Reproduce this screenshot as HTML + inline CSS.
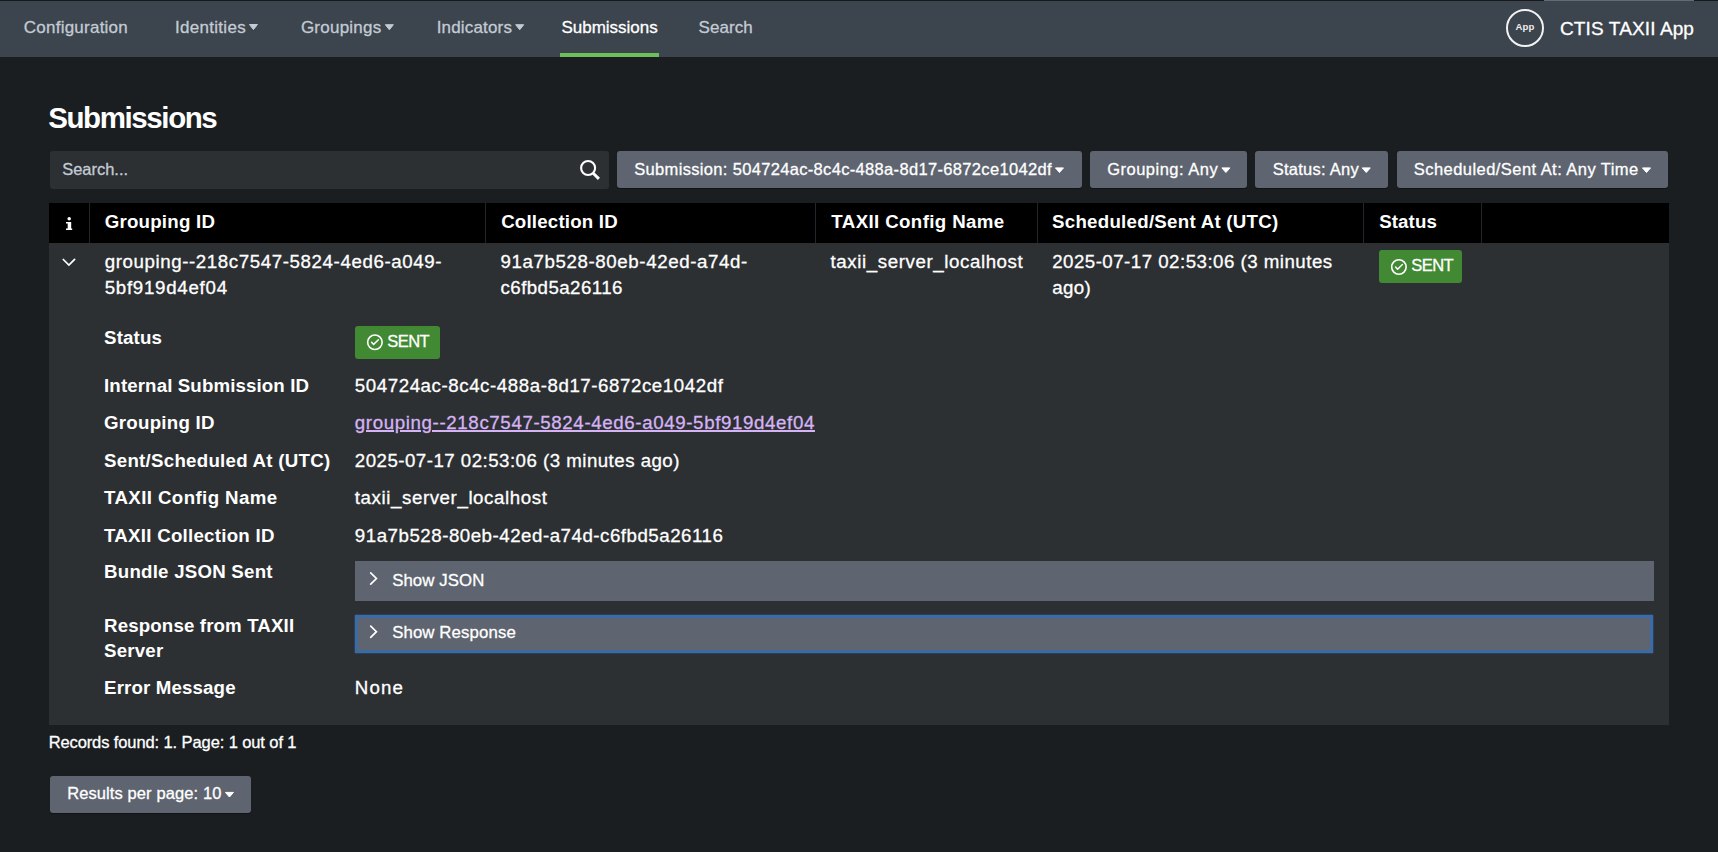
<!DOCTYPE html>
<html><head><meta charset="utf-8">
<style>
html,body{margin:0;padding:0;}
body{width:1718px;height:852px;overflow:hidden;position:relative;background:#1a1e21;font-family:"Liberation Sans",sans-serif;}
.b{position:absolute;}
.t{position:absolute;white-space:pre;}
svg{position:absolute;overflow:visible;}
</style></head><body>
<!-- top strip -->
<div class="b" style="left:0;top:0;width:1718px;height:1px;background:#161a1d"></div>
<div class="b" style="left:1544px;top:0;width:150px;height:1px;background:#636a76"></div>
<!-- nav -->
<div class="b" style="left:0;top:1px;width:1718px;height:56px;background:#3c444d"></div>
<div class="b" style="left:560px;top:53px;width:99px;height:4px;background:#6cbf5b"></div>
<!-- app circle -->
<div class="b" style="left:1506px;top:9px;width:34px;height:34px;border:2px solid #f2f2f2;border-radius:50%"></div>
<div class="t" style="left:1515.5px;top:22px;font-size:9.6px;line-height:10px;font-weight:700;color:#eeeeee;letter-spacing:0.15px">App</div>
<!-- search input -->
<div class="b" style="left:50px;top:151px;width:559px;height:38px;background:#2d3033;border-radius:3px"></div>
<!-- filter buttons -->
<div class="b" style="left:617px;top:151px;width:465px;height:37px;background:#5e6570;border-radius:3px;box-shadow:0 1px 0 #101316"></div>
<div class="b" style="left:1090px;top:151px;width:157px;height:37px;background:#5e6570;border-radius:3px;box-shadow:0 1px 0 #101316"></div>
<div class="b" style="left:1255px;top:151px;width:133px;height:37px;background:#5e6570;border-radius:3px;box-shadow:0 1px 0 #101316"></div>
<div class="b" style="left:1397px;top:151px;width:271px;height:37px;background:#5e6570;border-radius:3px;box-shadow:0 1px 0 #101316"></div>
<!-- table -->
<div class="b" style="left:49px;top:203px;width:1620px;height:40px;background:#000"></div>
<div class="b" style="left:89px;top:203px;width:1px;height:40px;background:#22272b"></div>
<div class="b" style="left:485px;top:203px;width:1px;height:40px;background:#22272b"></div>
<div class="b" style="left:815px;top:203px;width:1px;height:40px;background:#22272b"></div>
<div class="b" style="left:1037px;top:203px;width:1px;height:40px;background:#22272b"></div>
<div class="b" style="left:1363px;top:203px;width:1px;height:40px;background:#22272b"></div>
<div class="b" style="left:1481px;top:203px;width:1px;height:40px;background:#22272b"></div>
<div class="b" style="left:49px;top:243px;width:1620px;height:482px;background:#2d3033"></div>
<!-- badges -->
<div class="b" style="left:1379px;top:250px;width:83px;height:33px;background:#428934;border-radius:3px"></div>
<div class="b" style="left:355px;top:326px;width:85px;height:33px;background:#428934;border-radius:3px"></div>
<!-- show boxes -->
<div class="b" style="left:355px;top:561px;width:1299px;height:40px;background:#5e6570"></div>
<div class="b" style="left:355px;top:615px;width:1292px;height:32px;background:#5e6570;border:3px solid #3a6ba6;box-shadow:0 0 1.5px #3a6ba6"></div>
<!-- footer button -->
<div class="b" style="left:50px;top:776px;width:201px;height:37px;background:#5e6570;border-radius:3px;box-shadow:0 1px 0 #101316"></div>
<!-- ICONS -->
<svg width="1718" height="852" style="left:0;top:0" viewBox="0 0 1718 852"><path d="M249.45 24.50H257.45L253.45 29.60Z" fill="#c3cbd4" stroke="#c3cbd4" stroke-width="1.0" stroke-linejoin="round"/><path d="M385.35 24.70H393.35L389.35 29.80Z" fill="#c3cbd4" stroke="#c3cbd4" stroke-width="1.0" stroke-linejoin="round"/><path d="M515.70 24.70H523.70L519.70 29.80Z" fill="#c3cbd4" stroke="#c3cbd4" stroke-width="1.0" stroke-linejoin="round"/><path d="M1055.45 167.90H1063.45L1059.45 172.50Z" fill="#ffffff" stroke="#ffffff" stroke-width="1.0" stroke-linejoin="round"/><path d="M1221.90 167.90H1229.90L1225.90 172.50Z" fill="#ffffff" stroke="#ffffff" stroke-width="1.0" stroke-linejoin="round"/><path d="M1362.25 167.90H1370.25L1366.25 172.50Z" fill="#ffffff" stroke="#ffffff" stroke-width="1.0" stroke-linejoin="round"/><path d="M1642.50 167.90H1650.50L1646.50 172.50Z" fill="#ffffff" stroke="#ffffff" stroke-width="1.0" stroke-linejoin="round"/><path d="M225.45 792.40H233.45L229.45 797.00Z" fill="#ffffff" stroke="#ffffff" stroke-width="1.0" stroke-linejoin="round"/><circle cx="588.1" cy="168" r="7.0" fill="none" stroke="#fff" stroke-width="2.1"/><path d="M593.2 173.3L598.9 178.9" stroke="#fff" stroke-width="3.0" stroke-linecap="butt"/><circle cx="69.2" cy="218.7" r="1.75" fill="#fff"/><path d="M66 222H71.2V228.6H72.2V230H66V228.6H67.7V223.4H66Z" fill="#fff"/><path d="M63.3 259.5L68.9 265.1L74.6 259.4" fill="none" stroke="#fff" stroke-width="1.75" stroke-linecap="round" stroke-linejoin="miter"/><path d="M370.7 572.9L376.4 578.5L370.7 584.1" fill="none" stroke="#fff" stroke-width="1.7" stroke-linecap="round"/><path d="M370.7 626.1L376.4 631.7L370.7 637.3000000000001" fill="none" stroke="#fff" stroke-width="1.7" stroke-linecap="round"/><circle cx="1398.9" cy="267.0" r="7.25" fill="none" stroke="#fff" stroke-width="1.6"/><path d="M1395.60 267.10L1397.60 269.20L1402.40 264.50" fill="none" stroke="#fff" stroke-width="1.5" stroke-linecap="round" stroke-linejoin="round"/><circle cx="374.9" cy="342.2" r="7.25" fill="none" stroke="#fff" stroke-width="1.6"/><path d="M371.60 342.30L373.60 344.40L378.40 339.70" fill="none" stroke="#fff" stroke-width="1.5" stroke-linecap="round" stroke-linejoin="round"/></svg>
<div class='t' style='left:23.82px;top:19.00px;font-size:17px;line-height:17px;font-weight:400;color:#c3cbd4;letter-spacing:0.236px;-webkit-text-stroke:0.3px #c3cbd4;'>Configuration</div>
<div class='t' style='left:175.02px;top:19.00px;font-size:17px;line-height:17px;font-weight:400;color:#c3cbd4;letter-spacing:0.290px;-webkit-text-stroke:0.3px #c3cbd4;'>Identities</div>
<div class='t' style='left:300.92px;top:19.00px;font-size:17px;line-height:17px;font-weight:400;color:#c3cbd4;letter-spacing:0.240px;-webkit-text-stroke:0.3px #c3cbd4;'>Groupings</div>
<div class='t' style='left:436.72px;top:19.00px;font-size:17px;line-height:17px;font-weight:400;color:#c3cbd4;letter-spacing:0.162px;-webkit-text-stroke:0.3px #c3cbd4;'>Indicators</div>
<div class='t' style='left:561.42px;top:19.00px;font-size:17px;line-height:17px;font-weight:400;color:#ffffff;letter-spacing:-0.002px;-webkit-text-stroke:0.3px #ffffff;'>Submissions</div>
<div class='t' style='left:698.62px;top:19.00px;font-size:17px;line-height:17px;font-weight:400;color:#c3cbd4;letter-spacing:0.057px;-webkit-text-stroke:0.3px #c3cbd4;'>Search</div>
<div class='t' style='left:1560.04px;top:19.00px;font-size:19px;line-height:19px;font-weight:400;color:#ffffff;letter-spacing:0.120px;-webkit-text-stroke:0.3px #ffffff;'>CTIS TAXII App</div>
<div class='t' style='left:48.22px;top:103.00px;font-size:29.5px;line-height:29.5px;font-weight:700;color:#ffffff;letter-spacing:-1.405px;'>Submissions</div>
<div class='t' style='left:62.24px;top:161.00px;font-size:16.5px;line-height:16.5px;font-weight:400;color:#c3cbd4;letter-spacing:-0.028px;-webkit-text-stroke:0.3px #c3cbd4;'>Search...</div>
<div class='t' style='left:634.24px;top:161.00px;font-size:16.5px;line-height:16.5px;font-weight:400;color:#ffffff;letter-spacing:0.330px;-webkit-text-stroke:0.3px #ffffff;'>Submission: 504724ac-8c4c-488a-8d17-6872ce1042df</div>
<div class='t' style='left:1107.24px;top:161.00px;font-size:16.5px;line-height:16.5px;font-weight:400;color:#ffffff;letter-spacing:0.487px;-webkit-text-stroke:0.3px #ffffff;'>Grouping: Any</div>
<div class='t' style='left:1272.74px;top:161.00px;font-size:16.5px;line-height:16.5px;font-weight:400;color:#ffffff;letter-spacing:0.255px;-webkit-text-stroke:0.3px #ffffff;'>Status: Any</div>
<div class='t' style='left:1413.74px;top:161.00px;font-size:16.5px;line-height:16.5px;font-weight:400;color:#ffffff;letter-spacing:0.450px;-webkit-text-stroke:0.3px #ffffff;'>Scheduled/Sent At: Any Time</div>
<div class='t' style='left:104.65px;top:213.00px;font-size:18.7px;line-height:18.7px;font-weight:700;color:#ffffff;letter-spacing:0.233px;'>Grouping ID</div>
<div class='t' style='left:501.15px;top:213.00px;font-size:18.7px;line-height:18.7px;font-weight:700;color:#ffffff;letter-spacing:0.198px;'>Collection ID</div>
<div class='t' style='left:831.35px;top:213.00px;font-size:18.7px;line-height:18.7px;font-weight:700;color:#ffffff;letter-spacing:0.380px;'>TAXII Config Name</div>
<div class='t' style='left:1052.05px;top:213.00px;font-size:18.7px;line-height:18.7px;font-weight:700;color:#ffffff;letter-spacing:0.261px;'>Scheduled/Sent At (UTC)</div>
<div class='t' style='left:1379.15px;top:213.00px;font-size:18.7px;line-height:18.7px;font-weight:700;color:#ffffff;letter-spacing:0.114px;'>Status</div>
<div class='t' style='left:104.65px;top:253.00px;font-size:18.7px;line-height:18.7px;font-weight:400;color:#ffffff;letter-spacing:0.603px;-webkit-text-stroke:0.3px #ffffff;'>grouping--218c7547-5824-4ed6-a049-</div>
<div class='t' style='left:104.65px;top:279.00px;font-size:18.7px;line-height:18.7px;font-weight:400;color:#ffffff;letter-spacing:0.733px;-webkit-text-stroke:0.3px #ffffff;'>5bf919d4ef04</div>
<div class='t' style='left:500.55px;top:253.00px;font-size:18.7px;line-height:18.7px;font-weight:400;color:#ffffff;letter-spacing:0.606px;-webkit-text-stroke:0.3px #ffffff;'>91a7b528-80eb-42ed-a74d-</div>
<div class='t' style='left:500.55px;top:279.00px;font-size:18.7px;line-height:18.7px;font-weight:400;color:#ffffff;letter-spacing:0.437px;-webkit-text-stroke:0.3px #ffffff;'>c6fbd5a26116</div>
<div class='t' style='left:830.55px;top:253.00px;font-size:18.7px;line-height:18.7px;font-weight:400;color:#ffffff;letter-spacing:0.595px;-webkit-text-stroke:0.3px #ffffff;'>taxii_server_localhost</div>
<div class='t' style='left:1052.15px;top:253.00px;font-size:18.7px;line-height:18.7px;font-weight:400;color:#ffffff;letter-spacing:0.484px;-webkit-text-stroke:0.3px #ffffff;'>2025-07-17 02:53:06 (3 minutes</div>
<div class='t' style='left:1052.15px;top:279.00px;font-size:18.7px;line-height:18.7px;font-weight:400;color:#ffffff;letter-spacing:0.397px;-webkit-text-stroke:0.3px #ffffff;'>ago)</div>
<div class='t' style='left:104.05px;top:329.00px;font-size:18.7px;line-height:18.7px;font-weight:700;color:#ffffff;letter-spacing:0.134px;'>Status</div>
<div class='t' style='left:104.05px;top:377.00px;font-size:18.7px;line-height:18.7px;font-weight:700;color:#ffffff;letter-spacing:0.115px;'>Internal Submission ID</div>
<div class='t' style='left:104.05px;top:414.00px;font-size:18.7px;line-height:18.7px;font-weight:700;color:#ffffff;letter-spacing:0.243px;'>Grouping ID</div>
<div class='t' style='left:104.05px;top:452.00px;font-size:18.7px;line-height:18.7px;font-weight:700;color:#ffffff;letter-spacing:0.256px;'>Sent/Scheduled At (UTC)</div>
<div class='t' style='left:104.05px;top:489.00px;font-size:18.7px;line-height:18.7px;font-weight:700;color:#ffffff;letter-spacing:0.393px;'>TAXII Config Name</div>
<div class='t' style='left:104.05px;top:527.00px;font-size:18.7px;line-height:18.7px;font-weight:700;color:#ffffff;letter-spacing:0.256px;'>TAXII Collection ID</div>
<div class='t' style='left:104.05px;top:563.00px;font-size:18.7px;line-height:18.7px;font-weight:700;color:#ffffff;letter-spacing:0.226px;'>Bundle JSON Sent</div>
<div class='t' style='left:104.05px;top:617.00px;font-size:18.7px;line-height:18.7px;font-weight:700;color:#ffffff;letter-spacing:0.138px;'>Response from TAXII</div>
<div class='t' style='left:104.05px;top:642.00px;font-size:18.7px;line-height:18.7px;font-weight:700;color:#ffffff;letter-spacing:0.199px;'>Server</div>
<div class='t' style='left:104.05px;top:679.00px;font-size:18.7px;line-height:18.7px;font-weight:700;color:#ffffff;letter-spacing:0.138px;'>Error Message</div>
<div class='t' style='left:354.85px;top:377.00px;font-size:18.7px;line-height:18.7px;font-weight:400;color:#ffffff;letter-spacing:0.569px;-webkit-text-stroke:0.3px #ffffff;'>504724ac-8c4c-488a-8d17-6872ce1042df</div>
<div class='t' style='left:354.85px;top:414.00px;font-size:18.7px;line-height:18.7px;font-weight:400;color:#d5b3f5;letter-spacing:0.629px;-webkit-text-stroke:0.3px #d5b3f5;text-decoration:underline;text-underline-offset:0.6px;text-decoration-thickness:2px;'>grouping--218c7547-5824-4ed6-a049-5bf919d4ef04</div>
<div class='t' style='left:354.85px;top:452.00px;font-size:18.7px;line-height:18.7px;font-weight:400;color:#ffffff;letter-spacing:0.472px;-webkit-text-stroke:0.3px #ffffff;'>2025-07-17 02:53:06 (3 minutes ago)</div>
<div class='t' style='left:354.85px;top:489.00px;font-size:18.7px;line-height:18.7px;font-weight:400;color:#ffffff;letter-spacing:0.585px;-webkit-text-stroke:0.3px #ffffff;'>taxii_server_localhost</div>
<div class='t' style='left:354.85px;top:527.00px;font-size:18.7px;line-height:18.7px;font-weight:400;color:#ffffff;letter-spacing:0.519px;-webkit-text-stroke:0.3px #ffffff;'>91a7b528-80eb-42ed-a74d-c6fbd5a26116</div>
<div class='t' style='left:354.85px;top:679.00px;font-size:18.7px;line-height:18.7px;font-weight:400;color:#ffffff;letter-spacing:1.103px;-webkit-text-stroke:0.3px #ffffff;'>None</div>
<div class='t' style='left:392.13px;top:573.00px;font-size:16.8px;line-height:16.8px;font-weight:400;color:#ffffff;letter-spacing:0.105px;-webkit-text-stroke:0.3px #ffffff;'>Show JSON</div>
<div class='t' style='left:392.13px;top:625.00px;font-size:16.8px;line-height:16.8px;font-weight:400;color:#ffffff;letter-spacing:0.119px;-webkit-text-stroke:0.3px #ffffff;'>Show Response</div>
<div class='t' style='left:1411.24px;top:257.00px;font-size:16.5px;line-height:16.5px;font-weight:400;color:#ffffff;letter-spacing:-0.532px;-webkit-text-stroke:0.3px #ffffff;'>SENT</div>
<div class='t' style='left:387.24px;top:333.00px;font-size:16.5px;line-height:16.5px;font-weight:400;color:#ffffff;letter-spacing:-0.532px;-webkit-text-stroke:0.3px #ffffff;'>SENT</div>
<div class='t' style='left:48.64px;top:734.00px;font-size:16.5px;line-height:16.5px;font-weight:400;color:#ffffff;letter-spacing:-0.104px;-webkit-text-stroke:0.3px #ffffff;'>Records found: 1. Page: 1 out of 1</div>
<div class='t' style='left:67.14px;top:785.00px;font-size:16.5px;line-height:16.5px;font-weight:400;color:#ffffff;letter-spacing:0.103px;-webkit-text-stroke:0.3px #ffffff;'>Results per page: 10</div>
</body></html>
